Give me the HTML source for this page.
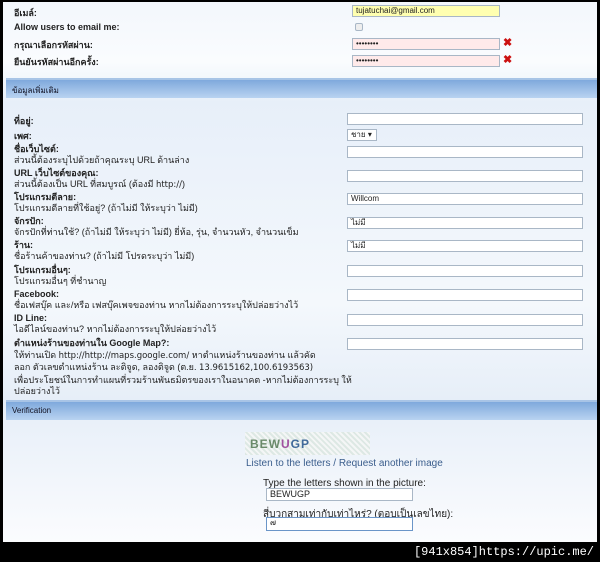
<!DOCTYPE html>
<html><head><meta charset="utf-8"><style>
*{margin:0;padding:0;box-sizing:border-box}
body{width:600px;height:562px;background:#000;position:relative;overflow:hidden;font-family:"Liberation Sans","Noto Sans CJK SC",sans-serif;font-size:9px;color:#222}
#pg{position:absolute;left:3px;top:2px;width:594px;height:540px;background:linear-gradient(#f3f7fc 0,#fafcfe 60px,#e7eff9 100px,#f4f8fc 300px,#e6eef8 400px,#fbfcfe 540px)}
.a{position:absolute;white-space:nowrap}
.b{font-weight:bold}
.v{font-family:"DejaVu Sans","Noto Sans CJK SC",sans-serif;font-size:8.5px}
.in{position:absolute;border:1px solid #a9b7c6;background:#fff;height:12px;font-size:8px;padding-left:3px;line-height:10px}
.bar{position:absolute;left:3px;width:591px;height:20px;border-top:2px solid #a8c4e6;background:linear-gradient(#7fa9dc,#b9d3f1);font-size:8px;color:#112;padding:4px 6px}
.x{position:absolute;color:#c11;font-weight:bold;font-size:11px}
</style></head><body><div id="pg">
<div class="a b" style="left:11px;top:4px">อีเมล์:</div>
<div class="in" style="left:349px;top:3px;width:148px;background:#ffffb0">tujatuchai@gmail.com</div>
<div class="a b" style="left:11px;top:20px">Allow users to email me:</div>
<div class="in" style="left:352px;top:21px;width:8px;height:8px;border-radius:2px;background:#eee"></div>
<div class="a b" style="left:11px;top:36px">กรุณาเลือกรหัสผ่าน:</div>
<div class="in" style="left:349px;top:36px;width:148px;background:#ffeaea">••••••••</div><div class="x" style="left:500px;top:34px">✖</div>
<div class="a b" style="left:11px;top:53px">ยืนยันรหัสผ่านอีกครั้ง:</div>
<div class="in" style="left:349px;top:53px;width:148px;background:#ffeaea">••••••••</div><div class="x" style="left:500px;top:51px">✖</div>
<div class="bar" style="top:76px">ข้อมูลเพิ่มเติม</div>
<div class="a b" style="left:11px;top:112px">ที่อยู่:</div><div class="in" style="left:344px;top:111px;width:236px"></div>
<div class="a b" style="left:11px;top:127px">เพศ:</div><div class="in" style="left:344px;top:127px;width:30px">ชาย ▾</div>
<div class="a" style="left:11px;top:142px;line-height:11px"><b>ชื่อเว็บไซต์:</b><br>ส่วนนี้ต้องระบุไปด้วยถ้าคุณระบุ URL ด้านล่าง</div><div class="in" style="left:344px;top:144px;width:236px"></div>
<div class="a" style="left:11px;top:166px;line-height:11px"><b>URL เว็บไซต์ของคุณ:</b><br>ส่วนนี้ต้องเป็น URL ที่สมบูรณ์ (ต้องมี <span class="v">http://</span>)</div><div class="in" style="left:344px;top:168px;width:236px"></div>
<div class="a" style="left:11px;top:190px;line-height:11px"><b>โปรแกรมตีลาย:</b><br>โปรแกรมตีลายที่ใช้อยู่? (ถ้าไม่มี ให้ระบุว่า ไม่มี)</div><div class="in" style="left:344px;top:191px;width:236px">Willcom</div>
<div class="a" style="left:11px;top:214px;line-height:11px"><b>จักรปัก:</b><br>จักรปักที่ท่านใช้? (ถ้าไม่มี ให้ระบุว่า ไม่มี) ยี่ห้อ, รุ่น, จำนวนหัว, จำนวนเข็ม</div><div class="in" style="left:344px;top:215px;width:236px">ไม่มี</div>
<div class="a" style="left:11px;top:238px;line-height:11px"><b>ร้าน:</b><br>ชื่อร้านค้าของท่าน? (ถ้าไม่มี โปรดระบุว่า ไม่มี)</div><div class="in" style="left:344px;top:238px;width:236px">ไม่มี</div>
<div class="a" style="left:11px;top:263px;line-height:11px"><b>โปรแกรมอื่นๆ:</b><br>โปรแกรมอื่นๆ ที่ชำนาญ</div><div class="in" style="left:344px;top:263px;width:236px"></div>
<div class="a" style="left:11px;top:287px;line-height:11px"><b>Facebook:</b><br>ชื่อเฟสบุ๊ค และ/หรือ เฟสบุ๊คเพจของท่าน หากไม่ต้องการระบุให้ปล่อยว่างไว้</div><div class="in" style="left:344px;top:287px;width:236px"></div>
<div class="a" style="left:11px;top:311px;line-height:11px"><b>ID Line:</b><br>ไอดีไลน์ของท่าน? หากไม่ต้องการระบุให้ปล่อยว่างไว้</div><div class="in" style="left:344px;top:312px;width:236px"></div>
<div class="a" style="left:11px;top:336px;line-height:11.5px"><b>ตำแหน่งร้านของท่านใน Google Map?:</b><br>ให้ท่านเปิด <span class="v">http://http://maps.google.com/</span> หาตำแหน่งร้านของท่าน แล้วคัด<br>ลอก ตัวเลขตำแหน่งร้าน ละติจูด, ลองติจูด (ต.ย. <span class="v">13.9615162,100.6193563)</span><br>เพื่อประโยชน์ในการทำแผนที่รวมร้านพันธมิตรของเราในอนาคต -หากไม่ต้องการระบุ ให้<br>ปล่อยว่างไว้</div><div class="in" style="left:344px;top:336px;width:236px"></div>
<div class="bar" style="top:398px">Verification</div>
<div class="a" style="left:242px;top:430px;width:125px;height:23px;background:repeating-linear-gradient(45deg,#dde8e4 0 2px,#f4f6f6 2px 4px);font:bold 12px 'Liberation Sans';letter-spacing:1px;padding:5px 0 0 5px"><span style="color:#6a8a6a">BEW</span><span style="color:#a050a0">U</span><span style="color:#406a9a">GP</span></div>
<div class="a" style="left:243px;top:456px;font-size:10px;color:#3a5d8c">Listen to the letters / Request another image</div>
<div class="a" style="left:260px;top:476px;font-size:10px;color:#222">Type the letters shown in the picture:</div>
<div class="in" style="left:263px;top:486px;width:147px;height:13px;font-size:9px">BEWUGP</div>
<div class="a" style="left:260px;top:505px;font-size:10px">สี่บวกสามเท่ากับเท่าไหร่? (ตอบเป็นเลขไทย):</div>
<div class="in" style="left:263px;top:515px;width:147px;height:14px;border-color:#6a95c8">๗</div>
</div>
<div class="a" style="right:6px;top:545px;color:#fff;font:12px 'Liberation Mono',monospace">[941x854]https://upic.me/</div>
</body></html>
